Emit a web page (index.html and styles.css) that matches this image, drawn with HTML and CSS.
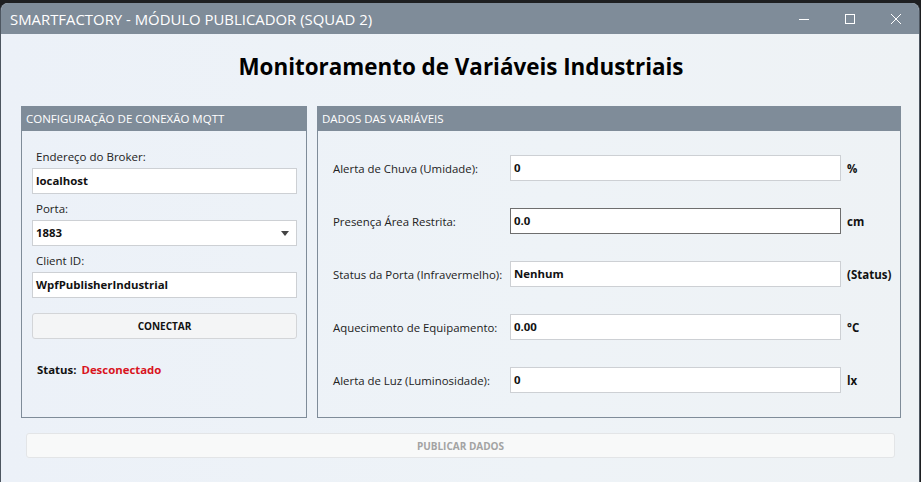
FILE: index.html
```html
<!DOCTYPE html>
<html lang="pt">
<head>
<meta charset="utf-8">
<title>SmartFactory</title>
<link rel="stylesheet" href="styles.css">
</head>
<body>
<div class="window">
  <div class="titlebar">
    <span class="title">SMARTFACTORY - MÓDULO PUBLICADOR (SQUAD 2)</span>
    <div class="controls">
      <span class="ctl"><svg width="12" height="12" viewBox="0 0 12 12"><path d="M1 6.5h10" stroke="#fff" stroke-width="1"/></svg></span>
      <span class="ctl"><svg width="12" height="12" viewBox="0 0 12 12"><rect x="1.5" y="1.5" width="9" height="9" fill="none" stroke="#fff" stroke-width="1"/></svg></span>
      <span class="ctl"><svg width="12" height="12" viewBox="0 0 12 12"><path d="M1 1L11 11M11 1L1 11" stroke="#fff" stroke-width="1"/></svg></span>
    </div>
  </div>
  <div class="content">
    <h1 class="heading">Monitoramento de Variáveis Industriais</h1>
    <div class="panels">
      <section class="panel panel-left">
        <div class="panel-head">CONFIGURAÇÃO DE CONEXÃO MQTT</div>
        <div class="panel-body left-body">
          <label class="field-label">Endereço do Broker:</label>
          <div class="input">localhost</div>
          <label class="field-label">Porta:</label>
          <div class="input select">1883<svg class="caret" width="8" height="5" viewBox="0 0 8 5"><path d="M0 0h8L4 5z" fill="#444"/></svg></div>
          <label class="field-label">Client ID:</label>
          <div class="input">WpfPublisherIndustrial</div>
          <button class="btn">CONECTAR</button>
          <div class="status"><b>Status:</b><span class="status-val">Desconectado</span></div>
        </div>
      </section>
      <section class="panel panel-right">
        <div class="panel-head">DADOS DAS VARIÁVEIS</div>
        <div class="panel-body vars">
          <span class="var-label">Alerta de Chuva (Umidade):</span>
          <div class="input">0</div>
          <span class="unit">%</span>
          <span class="var-label">Presença Área Restrita:</span>
          <div class="input focus">0.0</div>
          <span class="unit">cm</span>
          <span class="var-label">Status da Porta (Infravermelho):</span>
          <div class="input">Nenhum</div>
          <span class="unit">(Status)</span>
          <span class="var-label">Aquecimento de Equipamento:</span>
          <div class="input">0.00</div>
          <span class="unit">°C</span>
          <span class="var-label">Alerta de Luz (Luminosidade):</span>
          <div class="input">0</div>
          <span class="unit">lx</span>
        </div>
      </section>
    </div>
    <button class="btn btn-publish" disabled>PUBLICAR DADOS</button>
  </div>
</div>
</body>
</html>
```
FILE: styles.css
```css
html, body {
  margin: 0;
  padding: 0;
}
body {
  background: #1e1f21;
  width: 921px;
  height: 482px;
  overflow: hidden;
  font-family: "Open Sans", "Noto Sans", sans-serif;
  color: #111;
}
.window {
  margin-top: 3px;
  height: 479px;
  width: 920px;
  box-sizing: border-box;
  border-radius: 8px 8px 0 0;
  border-left: 1px solid #4d5660;
  border-right: 1px solid #4d5660;
  background: linear-gradient(90deg, #ecf1f8 0%, #eef3f7 60%, #eef2f5 100%);
  overflow: hidden;
  display: flex;
  flex-direction: column;
}
.titlebar {
  height: 31px;
  background: #7f8c99;
  display: flex;
  align-items: center;
  justify-content: space-between;
  flex-shrink: 0;
}
.title {
  color: #fff;
  font-size: 14.9px;
  padding-left: 9px;
}
.controls {
  display: flex;
  height: 100%;
}
.ctl {
  width: 46px;
  display: flex;
  align-items: center;
  justify-content: center;
}
.content {
  flex: 1;
  display: flex;
  flex-direction: column;
  padding: 0 18px 0 20px;
}
.heading {
  margin: 16px 0 0;
  height: 38px;
  line-height: 34px;
  font-size: 22.4px;
  font-weight: 700;
  text-align: center;
  color: #000;
}
.panels {
  display: flex;
  gap: 10px;
  margin-top: 18px;
  height: 312px;
}
.panel {
  border: 1px solid #7f8c99;
  box-sizing: border-box;
  display: flex;
  flex-direction: column;
  flex-shrink: 0;
}
.panel-left { width: 286px; }
.panel-right { width: 584px; }
.panel-head {
  height: 24px;
  background: #7f8c99;
  color: #fff;
  font-size: 11.5px;
  line-height: 24px;
  padding-left: 4px;
  flex-shrink: 0;
}
.left-body {
  padding: 11px 9px 0 10px;
  display: flex;
  flex-direction: column;
}
.field-label {
  display: block;
  font-size: 11.5px;
  line-height: 20px;
  padding: 5px 0 1px 4px;
  color: #222;
}
.input {
  height: 26px;
  box-sizing: border-box;
  background: #fff;
  border: 1px solid #cdd0d4;
  font-size: 11.4px;
  font-weight: 700;
  line-height: 24px;
  padding-left: 3px;
  color: #111;
  position: relative;
}
.input.focus {
  border-color: #6e6e6e;
}
.select .caret {
  position: absolute;
  right: 7px;
  top: 10px;
}
.btn {
  font-family: "Open Sans", "Noto Sans", sans-serif;
  height: 26px;
  border: 1px solid #d3d5d8;
  border-radius: 3px;
  background: #f4f5f6;
  font-size: 10px;
  font-weight: 700;
  color: #111;
  margin-top: 15px;
  padding: 0;
}
.status {
  margin-top: 22px;
  font-size: 11.4px;
  padding-left: 5px;
  display: flex;
  gap: 5px;
  line-height: 18px;
}
.status-val {
  color: #d9141e;
  font-weight: 700;
}
.vars {
  display: grid;
  grid-template-columns: 177px 331px 1fr;
  grid-auto-rows: 26px;
  row-gap: 27px;
  align-items: center;
  padding: 24px 0 0 15px;
}
.var-label {
  font-size: 11.4px;
  color: #222;
}
.unit {
  font-size: 11.5px;
  font-weight: 700;
  padding-left: 6px;
}
.btn-publish {
  margin: 15px 0 0 5px;
  width: 869px;
  height: 25px;
  background: #f8f9f9;
  border: 1px solid #e3e5e7;
  color: #a3a3a3;
  border-radius: 3px;
}
```
